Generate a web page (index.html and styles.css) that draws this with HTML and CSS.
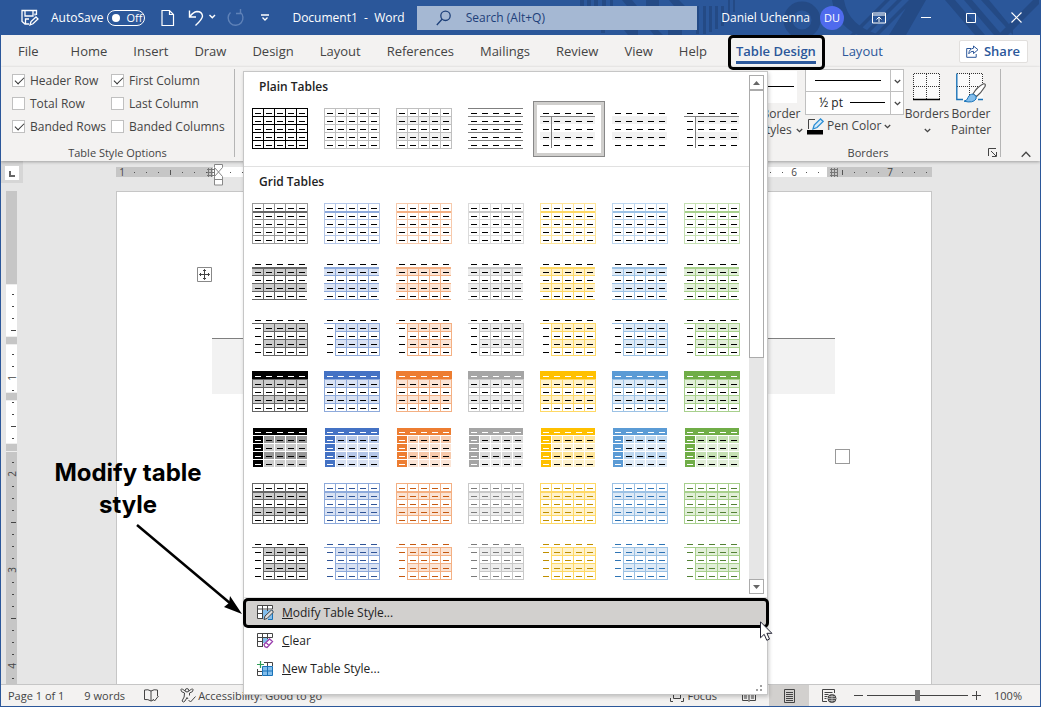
FILE: index.html
```html
<!DOCTYPE html>
<html lang="en">
<head>
<meta charset="utf-8">
<title>Document1 - Word</title>
<link rel="stylesheet" href="styles.css">
</head>
<body>
<div class="window">
  <header class="titlebar">
    <svg class="titlebar-art" width="460" height="35" viewBox="0 0 460 35" fill="#244a85" aria-hidden="true">
      <path d="M0 0h4v6H0zM7 0h4v6H7zM14 0h4v6h-4zM22 0h4v6h-4zM30 0h3v6h-3zM21 30h4v3h-4zM42 0h10l5 6H47zM66 0h13v6H66zM89 0h10l6 6H94zM44 30h14v5H48zM70 30h8l5 5h-9zM88 30h14v5H88z"/>
      <path d="M116 6h3v28h-3zM123 6h3v28h-3zM129 6h3v26h-3zM135 6h3v23h-3zM141 6h3v20h-3zM148 0h2v18h-2zM153 0h2v12h-2z"/>
      <circle cx="222" cy="20" r="14" fill="none" stroke="#244a85" stroke-width="9"/>
      <path d="M252 0h12q4 26 36 35h-22q-22-10-26-35zM270 35l35-35h5l-35 35zM282 35l35-35h5l-35 35zM294 35l35-35h5l-35 35zM331 0h15l-20 35h-17zM365 0h10l30 35h-10zM384 0h8l30 35h-8zM401 0h8l24 29v6zM418 35l35-35h6v4l-31 31z"/>
    </svg>
    <div class="quick">
      <button class="tb" aria-label="Save"><svg width="18" height="18" viewBox="0 0 18 18" fill="none" stroke="#fff" stroke-width="1.3"><path d="M8 15H4L1 12.500V1.500h14.500V6M4 1.500V7h8V1.500M4.500 15v-5H8M9 16l1-3.500L15 8l2 2-5 4.800zM14 4.500v2"/></svg></button>
      <label class="autosave"><span>AutoSave</span><input type="checkbox" class="sw-input"><span class="switch"><i></i>Off</span></label>
      <button class="tb new" aria-label="New"><svg width="14" height="18" viewBox="0 0 14 18" fill="none" stroke="#fff" stroke-width="1.2"><path d="M1 1.500h7.500l4 4V16.500H1zM8.500 1.500v4h4"/></svg></button>
      <button class="tb undo" aria-label="Undo"><svg width="28" height="18" viewBox="0 0 28 18" fill="none" stroke="#fff" stroke-width="1.4"><path d="M1.500 1.500v6.500h6.500M1.800 7.800Q5 3 9 2.500q5 0 5.500 4.500 0 3-7 9.500M21.500 6l2.800 2.800L27 6"/></svg></button>
      <button class="tb redo" aria-label="Redo"><svg width="18" height="18" viewBox="0 0 18 18" fill="none" stroke="#5f82b8" stroke-width="1.4"><path d="M3.500 3.500A7.400 7.400 0 1 0 13 3M13.500 0v4.500H9"/></svg></button>
      <button class="tb" aria-label="Customize"><svg width="8" height="8" viewBox="0 0 8 8" fill="none" stroke="#fff" stroke-width="1.3"><path d="M0 1h8M1.500 3.500L4 6l2.500-2.500"/></svg></button>
    </div>
    <div class="doc-title">Document1&nbsp; -&nbsp; Word</div>
    <label class="search"><svg width="16" height="16" viewBox="0 0 16 16" fill="none" stroke="#1e4079" stroke-width="1.3"><circle cx="9.500" cy="5.800" r="4.700"/><path d="M6 9.200L.8 15"/></svg><input type="search" placeholder="Search (Alt+Q)" aria-label="Search"></label>
    <div class="account">
      <span>Daniel Uchenna</span><button class="avatar">DU</button>
    </div>
    <div class="winbtns">
      <button class="tb" aria-label="Ribbon display"><svg width="14" height="12" viewBox="0 0 14 12" fill="none" stroke="#fff"><path d="M.5 1h13v10H.5zM.5 3h13M7 10V5M4.500 7.500L7 5l2.500 2.500"/></svg></button>
      <button class="tb" aria-label="Minimize"><svg width="10" height="10" viewBox="0 0 10 10" stroke="#fff"><path d="M0 4.500h10"/></svg></button>
      <button class="tb" aria-label="Maximize"><svg width="10" height="10" viewBox="0 0 10 10" fill="none" stroke="#fff"><path d="M.5.5h9v9h-9z"/></svg></button>
      <button class="tb" aria-label="Close"><svg width="11" height="11" viewBox="0 0 11 11" stroke="#fff" stroke-width="1.2"><path d="M.5.500l10 10M10.500.500l-10 10"/></svg></button>
    </div>
  </header>

  <nav class="tabs">
    <a href="#" class="file">File</a><a href="#">Home</a><a href="#">Insert</a><a href="#">Draw</a><a href="#">Design</a><a href="#">Layout</a><a href="#">References</a><a href="#">Mailings</a><a href="#">Review</a><a href="#">View</a><a href="#">Help</a><a href="#" class="active">Table Design</a><a href="#" class="ctx">Layout</a>
    <button class="share"><svg width="13" height="13" viewBox="0 0 13 13" fill="none" stroke="#2b579a"><path d="M5 3.500H.7v8.800h9.500V9M7.500 1l4.500 3.700-4.500 3.800V6.300Q4.500 6 2.800 8.800 3 4 7.500 3.200z"/></svg>Share</button>
  </nav>

  <section class="ribbon">
    <div class="group options">
      <div class="checks">
        <label><input type="checkbox" checked>Header Row</label>
        <label><input type="checkbox" checked>First Column</label>
        <label><input type="checkbox">Total Row</label>
        <label><input type="checkbox">Last Column</label>
        <label><input type="checkbox" checked>Banded Rows</label>
        <label><input type="checkbox">Banded Columns</label>
      </div>
      <div class="group-name">Table Style Options</div>
    </div>
    <div class="group borders">
      <div class="border-tools">
        <button class="big styles"><svg width="32" height="32" viewBox="0 0 32 32"><path fill="#fff" d="M0 0h32v32H0z"/><path stroke="#000" d="M3 15.500h26"/></svg><span>Border</span><span>Styles <svg class="chev" viewBox="0 0 7 5"><path d="M.8 1l2.700 2.600L6.200 1"/></svg></span></button>
        <div class="pen">
          <div class="combo"><select aria-label="Line style"><option></option></select><svg class="rule long" height="1" viewBox="0 0 66 1" preserveAspectRatio="none"><path fill="#000" d="M0 0h66v1H0z"/></svg><svg class="chev" viewBox="0 0 7 5"><path d="M.8 1l2.700 2.600L6.200 1"/></svg></div>
          <div class="combo"><select aria-label="Line weight"><option>½ pt</option></select><svg class="rule" height="1" viewBox="0 0 35 1" preserveAspectRatio="none"><path fill="#000" d="M0 0h35v1H0z"/></svg><svg class="chev" viewBox="0 0 7 5"><path d="M.8 1l2.700 2.600L6.200 1"/></svg></div>
          <button class="pencolor"><svg width="17" height="17" viewBox="0 0 17 17" fill="none"><path d="M8 1.500H1.500V11" stroke="#444"/><path d="M6 11l1.200-4L13.500.900l2.700 2.500L10 9.500z" fill="#d3e9f8" stroke="#2a8dd4" stroke-width="1.300"/><path fill="#000" d="M0 12h16v4.500H0z"/></svg>Pen Color <svg class="chev" viewBox="0 0 7 5"><path d="M.8 1l2.700 2.600L6.200 1"/></svg></button>
        </div>
        <button class="big"><svg width="28" height="32" viewBox="0 0 28 32" fill="none"><path fill="#fafafa" d="M1 3h26v26H1z"/><path d="M1 2.500h26M.5 3v25M13.500 3v25M26.500 3v25M1 15.500h26" stroke="#333" stroke-dasharray="1 1"/><path d="M0 28.500h27" stroke="#000" stroke-width="1.500"/></svg><span>Borders</span><span><svg class="chev" viewBox="0 0 7 5"><path d="M.8 1l2.700 2.600L6.200 1"/></svg></span></button>
        <button class="big"><svg width="30" height="32" viewBox="0 0 30 32" fill="none"><path fill="#fafafa" d="M1 3h26v26H1z"/><path d="M1 2.500h26M13.500 3v25M26.500 3v11M1 15.500h26" stroke="#333" stroke-dasharray="1 1"/><path d="M7 28.500H.8V2.500M22 28.500h5" stroke="#1a73b8" stroke-width="1.400"/><path d="M17 23Q21 16 27.500 12.800 30 12.500 29 15.500 25 22 20.500 25.500z" fill="#fff" stroke="#555" stroke-width="1.200"/><path d="M8 30.200Q11.500 29.500 12 26.500 13.500 22.800 17.500 23.200 21.500 25 20 28 17 32.500 8 30.200z" fill="#83beec" stroke="#1a73b8"/></svg><span>Border</span><span>Painter</span></button>
      </div>
      <div class="group-name">Borders</div>
      <button class="launcher" aria-label="Borders settings"><svg width="9" height="9" viewBox="0 0 9 9" fill="none" stroke="#444"><path d="M.5 8V.500H8M3 3l5 5M8.500 4v4.500H4"/></svg></button>
    </div>
    <button class="collapse" aria-label="Collapse ribbon"><svg width="10" height="7" viewBox="0 0 10 7" fill="none" stroke="#444" stroke-width="1.300"><path d="M.7 5.700L5 1.300l4.300 4.400"/></svg></button>
  </section>

  <main class="workspace">
    <div class="corner"><svg width="14" height="14" viewBox="0 0 14 14"><path fill="#fff" d="M0 0h14v14H0z"/><path d="M5 5v5h5" fill="none" stroke="#666" stroke-width="2"/></svg></div>
    <svg class="hruler" id="hruler" height="24" aria-hidden="true"></svg>
    <svg class="vruler" id="vruler" width="17" aria-hidden="true"></svg>
    <div class="page">
      <svg class="handle" width="15" height="15" viewBox="0 0 15 15" fill="#fff" stroke="#888"><path d="M.5.500h14v14H.5z"/><path d="M7.500 2.500v10M2.500 7.500h10M6 4l1.500-1.500L9 4M6 11l1.500 1.500L9 11M4 6L2.500 7.500 4 9M11 6l1.500 1.500L11 9" fill="none" stroke="#444"/></svg>
      <div class="doc-table"></div>
      <span class="resize"></span>
    </div>
  </main>

  <footer class="status">
    <span>Page 1 of 1</span>
    <span class="words">9 words</span>
    <svg class="book" width="15" height="13" viewBox="0 0 15 13" fill="none" stroke="#444"><path d="M7 2Q4 0 .5 1v9.500q3.500-.5 6.500 1.500 1 0 2-1M7 2v10M7 2q3-2 6.500-1v6M9 10l1.500 2L14.500 7"/></svg>
    <svg class="acc" width="16" height="15" viewBox="0 0 16 15" fill="none" stroke="#444"><circle cx="7" cy="2.300" r="1.700"/><path d="M5.500 3.500Q2 0 .8 1.500.5 4 4.500 5q.5 4-2.500 8 1.500 2 3 0L7 9.500l1 1.500M8.500 3.500Q12 0 13.200 1.500 13.500 4 9.500 5v2.500M8.500 12l2 2 5-5.500"/></svg>
    <span>Accessibility: Good to go</span>
    <div class="view">
      <svg width="14" height="13" viewBox="0 0 14 13" fill="none" stroke="#444"><path d="M3.500 3.500h7v6h-7zM.5 9v3.500H3M13.500 9v3.500H11M.5 3V.500H3M13.500 3V.500H11"/></svg><span>Focus</span>
      <button class="mode" aria-label="Read mode"><svg width="14" height="12" viewBox="0 0 14 12" fill="none" stroke="#444"><path d="M7 2Q4 .5.500 1v9.500H6l1 1 1-1h5.500V1Q10 .5 7 2v9M2 4h3M2 6h3M2 8h3M9 4h3M9 6h3M9 8h3"/></svg></button>
      <button class="mode on" aria-label="Print layout"><svg width="11" height="14" viewBox="0 0 11 14" fill="none" stroke="#444"><path d="M.5.500h10v13H.5zM2 3.500h7M2 5.500h7M2 7.500h7M2 9.500h7M2 11.500h7"/></svg></button>
      <button class="mode" aria-label="Web layout"><svg width="15" height="14" viewBox="0 0 15 14" fill="none" stroke="#444"><path d="M5 12.500H.5V.500h12V4M2.500 3.500h8M2.500 5.500h4M2.500 7.500h3M2.500 9.500h2"/><circle cx="10" cy="9.500" r="4" fill="#555"/><path d="M6 9.500h8M10 5.500v8M7 7.500h6M7 11.500h6" stroke="#ddd" stroke-width=".6"/></svg></button>
      <button class="zoom-btn out" aria-label="Zoom out"><svg width="9" height="9" viewBox="0 0 9 9" stroke="#444"><path d="M0 4.500h9"/></svg></button>
      <input type="range" aria-label="Zoom" min="0" max="100" value="50">
      <button class="zoom-btn" aria-label="Zoom in"><svg width="9" height="9" viewBox="0 0 9 9" stroke="#444"><path d="M0 4.500h9M4.500 0v9"/></svg></button>
      <span class="pct">100%</span>
    </div>
  </footer>

  <div class="panel">
    <div class="scroller">
      <div class="sections">
        <h2>Plain Tables</h2>
        <div class="gallery plain" id="plain"></div>
        <h2 class="ruled">Grid Tables</h2>
        <div class="gallery" id="grid"></div>
      </div>
      <div class="scrollbar">
        <button aria-label="Scroll up"><svg width="7" height="4" viewBox="0 0 7 4"><path fill="#666" d="M3.500 0L7 4H0z"/></svg></button>
        <div class="thumb"></div>
        <button aria-label="Scroll down"><svg width="7" height="4" viewBox="0 0 7 4"><path fill="#666" d="M3.500 4L0 0h7z"/></svg></button>
      </div>
    </div>
    <div class="menu">
      <button class="item hot"><svg width="17" height="16" viewBox="0 0 17 16" fill="none"><path fill="#fff" d="M1 1h14v13H1z"/><path fill="#83beec" d="M6 5h9v9H6z"/><path d="M.5 .5h15v3.500H.5zM.5 4v9.500H6M5.500 1v13M10.500 1v5M1 8.500h5" stroke="#444"/><path d="M15.500 5v9.500H11" stroke="#1a73b8"/><path d="M7 14.500l1-3.500 6.500-6 2 2L10 13.500z" fill="#ddd" stroke="#444"/></svg><span><u>M</u>odify Table Style...</span></button>
      <button class="item"><svg width="17" height="16" viewBox="0 0 17 16" fill="none"><path fill="#fff" d="M1 1h14v13H1z"/><path fill="#83beec" d="M6 5h5v5H6z"/><path d="M.5 .5h15v4H.5zM.5 4v9.500H6M5.500 1v13M10.500 1v5M1 8.500h5" stroke="#444"/><path d="M7 11.500L12.500 6l3 2.500-5.500 6q-2.500 0-3-3zM9 9.500l3 3" fill="#fff" stroke="#9a3fae" stroke-width="1.300"/></svg><span><u>C</u>lear</span></button>
      <button class="item"><svg width="17" height="16" viewBox="0 0 17 16" fill="none"><path d="M7 1.500h8.500V5M.5 8v6.500H5M10.500 1v4M1 10.500h4" stroke="#444"/><path d="M5.500 5.500h10v9h-10zM10.500 5.500v9M5.500 10h10" fill="#83beec" stroke="#1a73b8"/><path d="M3.500 0v7M0 3.500h7" stroke="#2f9e58" stroke-width="1.200"/></svg><span><u>N</u>ew Table Style...</span></button>
    </div>
    <svg class="grip" width="7" height="6" viewBox="0 0 7 6" fill="#a0a0a0"><path d="M4 0h2v2H4zM0 4h2v2H0zM4 4h2v2H4z"/></svg>
  </div>

  <div class="note">Modify table<br>style</div>
  <svg class="arrow" width="110" height="94" viewBox="0 0 110 94"><path d="M2 2l94 79" stroke="#000" stroke-width="2.500"/><path d="M107 91L89 84l5-4 1-7z"/></svg>
  <svg class="cursor" width="13" height="21" viewBox="0 0 13 21"><path d="M.5.800v16l3.700-3.500 2.600 6 2.700-1.200-2.600-5.800h5z" fill="#fff" stroke="#223"/></svg>
</div>
<script src="script.js"></script>
</body>
</html>
```

FILE: styles.css
```css
* { box-sizing: border-box; }
body { margin: 0; font-family: "Open Sans", "Noto Sans", sans-serif; font-size: 12px; line-height: 16px; color: #444; }
button, input, select { font: inherit; color: inherit; }
button { border: 0; padding: 0; background: none; }
a { color: inherit; text-decoration: none; }
svg { display: block; flex: none; }

.window { position: relative; display: flex; flex-direction: column; height: 100vh; min-height: 707px; border: 1px solid #2b579a; border-top: 0; background: #e6e6e6; overflow: hidden; }

.titlebar { position: relative; display: flex; align-items: center; height: 35px; flex: none; background: #2b579a; color: #fff; }
.titlebar-art { position: absolute; right: 0; top: 0; }
.titlebar > div, .search { position: relative; }
.quick { display: flex; align-items: center; padding-left: 20px; }
.autosave { display: flex; align-items: center; gap: 4px; margin: 0 16px 0 12px; }
.sw-input { position: absolute; opacity: 0; }
.switch { display: flex; align-items: center; gap: 6px; width: 38px; height: 16px; padding-left: 4px; border: 1px solid #fff; border-radius: 8px; font-size: 11px; line-height: 14px; }
.switch i { width: 8px; height: 8px; border-radius: 50%; background: #fff; }
.undo { margin: 0 11px 0 13px; }
.redo { margin-right: 16px; }
.doc-title { margin-left: 23px; white-space: nowrap; }
.search { display: flex; align-items: center; gap: 14px; width: 280px; height: 24px; margin-left: 12px; padding-left: 19px; background: #a5b8d3; }
.search input { flex: 1; min-width: 0; border: 0; background: none; padding: 0; }
.search input::placeholder { color: #1e4079; opacity: 1; }
.account { display: flex; align-items: center; gap: 10px; margin-left: auto; white-space: nowrap; }
.avatar { width: 24px; height: 24px; border-radius: 50%; background: #4f6bed; font-size: 11px; }
.winbtns { display: flex; align-items: center; gap: 35px; padding: 0 18px 0 28px; }

.tabs { display: flex; align-items: center; gap: 26px; height: 32px; flex: none; padding: 0 12px 0 17px; background: #f3f2f1; font-size: 13px; white-space: nowrap; }
.file { margin-right: 6px; }
.active { position: relative; margin-left: 3px; color: #2b579a; font-weight: 600; }
.active::before { content: ""; position: absolute; inset: -8px -9px -11px -8px; border: 3px solid #000; border-radius: 5px; z-index: 3; }
.active::after { content: ""; position: absolute; left: 0; right: 0; top: 18px; height: 3px; background: #2b579a; }
.ctx { color: #2b579a; }
.share { display: flex; align-items: center; gap: 5px; height: 23px; margin-left: auto; padding: 0 7px 0 6px; border: 1px solid #e1dfdd; border-radius: 2px; background: #fff; color: #2b579a; font-weight: 600; }

.ribbon { position: relative; display: flex; height: 94px; flex: none; padding-top: 2px; background: #f3f2f1; box-shadow: 0 1px 3px #0000004d; z-index: 1; }
.group { position: relative; display: flex; flex-direction: column; justify-content: space-between; height: 88px; border-right: 1px solid #b5b5b5; }
.group-name { text-align: center; line-height: 9px; font-size: 11px; }
.options { width: 234px; }
.checks { display: grid; grid-template-columns: 99px 1fr; grid-auto-rows: 23px; align-items: center; padding-left: 11px; white-space: nowrap; }
.checks label { display: flex; align-items: center; gap: 5px; }
.checks input { position: relative; appearance: none; width: 13px; height: 13px; margin: 0; border: 1px solid #c0c0c0; background: #fff; }
.checks input:checked::after { content: ""; position: absolute; left: 2px; top: 2px; width: 8px; height: 4px; border: solid #333; border-width: 0 0 1px 1px; transform: rotate(-45deg); }
.borders { width: 265px; margin-left: auto; }
.border-tools { display: flex; align-items: flex-start; justify-content: flex-end; gap: 4px; padding-right: 9px; }
.big { display: flex; flex-direction: column; align-items: center; width: 40px; padding-top: 2px; white-space: nowrap; }
.big span { display: flex; align-items: center; gap: 4px; min-height: 16px; }
.big svg + span { margin-top: 3px; }
.pen { width: 99px; margin-right: -1px; }
.chev { width: 7px; height: 5px; fill: none; stroke: #444; stroke-width: 1.3; }
.combo { position: relative; height: 23px; border: 1px solid #c0c0c0; background: #fff; }
.combo + .combo { border-top: 0; }
.combo select { appearance: none; width: 100%; height: 100%; border: 0; padding: 0 0 0 13px; background: none; color: #222; }
.combo .rule { position: absolute; right: 18px; top: 10px; width: 35px; }
.combo .long { width: 66px; right: 22px; }
.combo .chev { position: absolute; right: 2px; top: 9px; }
.combo::after { content: ""; position: absolute; right: 12px; top: 0; bottom: 0; border-left: 1px solid #c0c0c0; }
.pencolor { display: flex; align-items: center; gap: 3px; margin-top: 2px; padding-left: 2px; height: 18px; white-space: nowrap; }
.launcher { position: absolute; right: 3px; bottom: 0; }
.collapse { align-self: flex-end; margin: 0 9px 3px 20px; }

.workspace { flex: 1; min-height: 0; display: grid; grid-template-columns: 17px 1fr 10px; grid-template-rows: 30px 1fr; background: #e6e6e6; }
.corner { width: 22px; height: 22px; padding: 5px 4px; background: #d6d6d6; }
.hruler { width: 816px; margin: 6px auto 0; overflow: visible; }
.vruler { grid-row: 2; height: 100%; }
.page { position: relative; grid-column: 2; width: 816px; margin: 0 auto; padding: 146px 96px 0 95px; border: 1px solid #c6c6c6; border-bottom: 0; background: #fff; }
.doc-table { height: 56px; border-top: 1px solid #7f7f7f; background: #f2f2f2; }
.handle { position: absolute; left: 80px; top: 75px; }
.resize { position: absolute; right: 81px; top: 257px; width: 15px; height: 15px; border: 1px solid #999; background: #fff; }

.status { display: flex; align-items: center; height: 22px; flex: none; padding-left: 7px; border-top: 1px solid #c6c6c6; background: #f3f2f1; font-size: 11px; white-space: nowrap; }
.words { margin-left: 20px; }
.book { margin: 0 21px 0 19px; }
.acc { margin-right: 2px; }
.view { display: flex; align-items: center; align-self: stretch; margin-left: auto; padding-right: 18px; }
.view > span { margin-left: 3px; }
.mode { display: grid; place-items: center; align-self: stretch; width: 40px; }
.view > span + .mode { margin-left: 12px; }
.on { background: #d2d0ce; }
.out { margin-left: 5px; }
.view input { appearance: none; width: 101px; height: 12px; margin: 0 4px; background: linear-gradient(#444, #444) center / 100% 1px no-repeat; }
.view input::-webkit-slider-thumb { appearance: none; width: 5px; height: 11px; background: #777; }
.view > .pct { margin-left: 13px; }

.panel { position: absolute; left: 242px; top: 71px; width: 525px; border: 1px solid #c6c6c6; background: #fff; box-shadow: 1px 2px 4px #00000033; z-index: 2; color: #222; }
.scroller { display: flex; border-bottom: 1px solid #e1e1e1; }
.sections { flex: 1; }
.sections h2 { margin: 0; padding-left: 15px; font-size: 12px; line-height: 29px; font-weight: 600; }
.ruled { border-top: 1px solid #e1e1e1; }
.gallery { display: grid; grid-template-columns: repeat(7, 72px); padding: 0 0 9px 1px; }
.style { display: flex; align-items: flex-start; padding: 6px; height: 56px; border: 1px solid transparent; }
.style.selected { border-color: #888; box-shadow: inset 0 0 0 3px #d0cfcd; }
.scrollbar { display: flex; flex-direction: column; width: 15px; margin: 3px 3px 3px 0; background: #e6e6e6; }
.scrollbar button { display: grid; place-items: center; width: 15px; height: 15px; border: 1px solid #ababab; background: #fff; }
.thumb { height: 268px; margin-bottom: auto; border: 1px solid #ababab; background: #fff; }
.menu { padding: 1px 0 11px; }
.item { position: relative; display: flex; align-items: center; gap: 8px; width: 100%; height: 28px; padding-left: 13px; }
.hot { background: #d2d0ce; }
.hot::after { content: ""; position: absolute; inset: -1px -2px -1px -1px; border: 3px solid #000; border-radius: 5px; }
.grip { position: absolute; right: 4px; bottom: 3px; }

.note { position: absolute; left: 42px; top: 457px; width: 170px; text-align: center; color: #000; font: 700 24px/32px Inter, sans-serif; z-index: 3; }
.arrow { position: absolute; left: 134px; top: 523px; z-index: 3; }
.cursor { position: absolute; left: 759px; top: 621px; z-index: 4; }
```

FILE: script.js
```js
const rect = (x, y, w, h, fill) => `<path fill="${fill}" d="M${x} ${y}h${w}v${h}h${-w}z"/>`;

function dashes(colorAt) {
  let out = '';
  for (let r = 0; r < 5; r++)
    for (let c = 0; c < 5; c++) out += rect(3 + 11 * c, 5 + 8 * r, 6, 1, colorAt(r, c));
  return out;
}
function grid(color, x0 = 0, y0 = 0) {
  let out = '';
  for (let x = x0; x <= 55; x += 11) out += rect(x, y0, 1, 41 - y0, color);
  for (let y = y0; y <= 40; y += 8) out += rect(x0, y, 56 - x0, 1, color);
  return out;
}
const bands = (color, x = 0) => rect(x, 8, 55 - x, 8, color) + rect(x, 24, 55 - x, 8, color);
const black = () => '#000';

function button(art, label, selected) {
  return `<button class="style${selected ? ' selected' : ''}" aria-label="${label}">` +
    `<svg width="56" height="41" viewBox="0 0 56 41" shape-rendering="crispEdges">${art}</svg></button>`;
}

const stem = rect(0, 8, 55, 1, '#7f7f7f') + rect(11, 8, 1, 32, '#7f7f7f');
const plain = [
  grid('#000'),
  grid('#bfbfbf'),
  bands('#f2f2f2') + grid('#bfbfbf'),
  [0, 8, 16, 24, 32, 40].map(y => rect(0, y, 55, 1, '#7f7f7f')).join(''),
  bands('#f2f2f2') + stem,
  bands('#f2f2f2'),
  bands('#f2f2f2', 11) + stem
];
document.getElementById('plain').innerHTML =
  plain.map((art, i) => button(art + dashes(black), 'Plain style ' + (i + 1), i === 4)).join('');

const themes = [
  { base: '#000', dark: '#000', mid: '#666', light: '#999', band: '#ccc' },
  { base: '#4472c4', dark: '#2f5496', mid: '#8eaadb', light: '#b4c6e7', band: '#d9e2f3' },
  { base: '#ed7d31', dark: '#c45911', mid: '#f4b083', light: '#f7caac', band: '#fbe4d5' },
  { base: '#a5a5a5', dark: '#7b7b7b', mid: '#c9c9c9', light: '#dbdbdb', band: '#ededed' },
  { base: '#ffc000', dark: '#bf8f00', mid: '#ffd966', light: '#ffe599', band: '#fff2cc' },
  { base: '#5b9bd5', dark: '#2e74b5', mid: '#9cc2e5', light: '#bdd6ee', band: '#deeaf6' },
  { base: '#70ad47', dark: '#538135', mid: '#a8d08d', light: '#c5e0b3', band: '#e2efd9' }
];
function openGrid(t) {
  let out = bands(t.band) + rect(0, 8, 55, 2, t.mid);
  for (const x of [11, 22, 33, 44]) out += rect(x, 8, 1, 33, t.mid);
  for (const y of [16, 24, 32, 40]) out += rect(0, y, 55, 1, t.mid);
  return out;
}
const cornerGrid = t => bands(t.band, 11) + grid(t.mid, 11, 8) + rect(0, 8, 56, 1, t.mid);
function blocks(t) {
  let out = rect(1, 1, 54, 7, t.base);
  for (let r = 1; r < 5; r++)
    for (let c = 0; c < 5; c++)
      out += rect(1 + 11 * c, 1 + 8 * r, 10, 7, c === 0 ? t.base : r % 2 ? t.light : t.band);
  return out;
}
const rows = [
  t => grid(t.light) + rect(1, 8, 54, 2, t.mid) + dashes(black),
  t => openGrid(t) + dashes(black),
  t => cornerGrid(t) + dashes(black),
  t => bands(t.band) + grid(t.mid) + rect(0, 0, 56, 8, t.base) + dashes(r => r ? '#000' : '#fff'),
  t => blocks(t) + dashes((r, c) => r && c ? '#000' : '#fff'),
  t => bands(t.band) + grid(t.mid) + rect(0, 8, 56, 2, t.mid) + dashes(() => t.dark),
  t => cornerGrid(t) + dashes(() => t.dark)
];
document.getElementById('grid').innerHTML = rows
  .map((row, r) => themes.map((t, c) => button(row(t), `Grid style ${r + 1}.${c + 1}`)).join('')).join('');

/* Horizontal ruler: 96px per inch, ticks each eighth */
let h = rect(0, 0, 816, 10, '#fff') + rect(0, 0, 97, 10, '#c6c6c6') + rect(711, 0, 105, 10, '#c6c6c6');
for (let i = -7; i < 60; i++) {
  const x = 102 + i * 12;
  if (i % 8 === 0) continue;
  h += i % 4 === 0 ? rect(x, 3, 1, 5, '#555') : rect(x, 5, 1, 1, '#555');
}
for (const n of [-1, 6, 7])
  h += `<text x="${102 + 96 * n}" y="9" font-size="10" text-anchor="middle" fill="#444">${Math.abs(n)}</text>`;
for (const x of [91, 714])
  h += `<path d="M${x} 2.500h8M${x} 5.500h8M${x} 8.500h8M${x + 1.5} 1v9M${x + 4.5} 1v9M${x + 7.5} 1v9" stroke="#777"/>`;
h += '<path d="M98.500-2.500h8v3l-4 4.500 4 4.500v8.500h-8V9.500l4-4.500-4-4.500zM98.500 12.500h8" fill="#fff" stroke="#888"/>';
document.getElementById('hruler').innerHTML = h;

/* Vertical ruler with row markers */
let v = rect(5, 0, 11, 1200, '#c6c6c6');
for (const [y, len] of [[93, 53], [154, 48], [210, 43]]) v += rect(5, y, 11, len, '#fff');
for (const y of [93, 145, 153, 201, 209, 252, 260]) v += rect(5, y, 11, 1, '#eee');
for (let i = -7; i < 60; i++) {
  const y = 187 + i * 12;
  if (i % 8 === 0 || y === 151 || y === 259) continue;
  v += i % 4 === 0 ? rect(10, y, 5, 1, '#444') : rect(11, y, 2, 1, '#444');
}
for (const n of [0, 1, 2, 3])
  v += `<text transform="translate(15 ${187 + 96 * n}) rotate(-90)" font-size="10" text-anchor="middle" fill="#444">${n + 1}</text>`;
document.getElementById('vruler').innerHTML = v;
```
